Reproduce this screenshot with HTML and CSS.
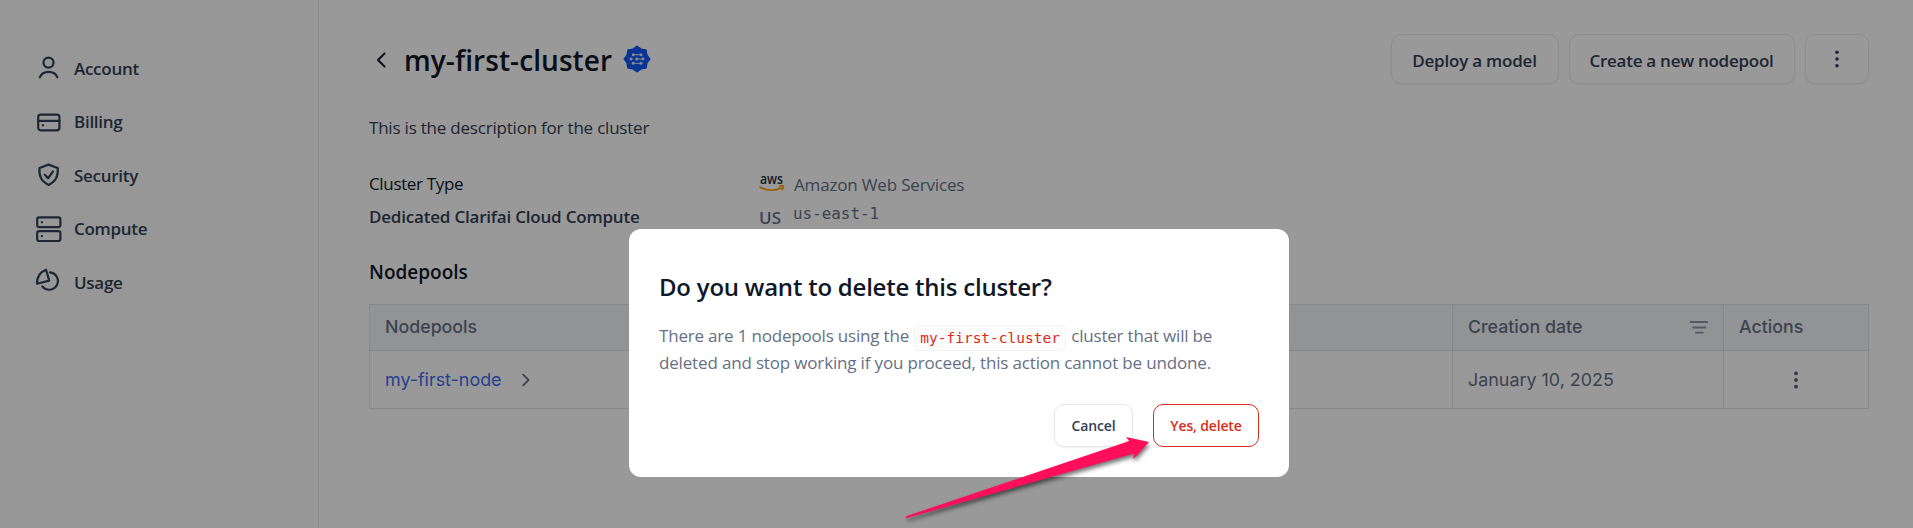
FILE: index.html
```
<!DOCTYPE html>
<html lang="en">
<head>
<meta charset="utf-8">
<title>my-first-cluster</title>
<link rel="stylesheet" href="styles.css">
</head>
<body>
<div class="app">
  <nav class="sidebar">
    <a class="nav-item"><svg class="nav-icon" viewBox="0 0 28 28"><circle cx="14.500" cy="8.600" r="5"/><path d="M5.800 23.300c1.400-3.600 4.800-5.400 8.800-5.400s7.400 1.800 8.800 5.400"/></svg>Account</a>
    <a class="nav-item"><svg class="nav-icon" viewBox="0 0 28 28"><rect x="4.200" y="6.600" width="21.200" height="15.700" rx="2.500"/><path d="M4.200 12.800h21.200"/><path d="M8.700 17.300h.4"/></svg>Billing</a>
    <a class="nav-item"><svg class="nav-icon" viewBox="0 0 28 28"><path d="M14.600 3.600 23.700 7c.7 8-1.500 12.800-9.100 17C7 19.800 4.800 15 5.500 7z"/><path d="M10.800 13.700l3.200 3.600 5-7"/></svg>Security</a>
    <a class="nav-item"><svg class="nav-icon" viewBox="0 0 28 28"><rect x="3.200" y="2.300" width="23.200" height="9.800" rx="2"/><rect x="3.200" y="16.200" width="23.200" height="9.800" rx="2"/><path d="M7.800 7.300h.2M7.800 21.100h.2"/></svg>Compute</a>
    <a class="nav-item"><svg class="nav-icon" viewBox="0 0 28 28"><path d="M12.100 1.800C6.500 3.800 2.900 8.800 3 15.700l12.200-3.100z"/><path d="M16 4.400a8.700 8.700 0 1 1-7.700 14"/></svg>Usage</a>
  </nav>
  <main class="main">
    <header class="header">
      <svg class="back" viewBox="0 0 10 16"><path d="M8.500 1.500 2 8l6.500 6.500"/></svg>
      <h1 class="title">my-first-cluster</h1>
      <svg class="badge" viewBox="0 0 28 28">
        <path class="badge-bg" d="M14 1.500l3.900 2.900 4.900.8.800 4.900 2.900 3.900-2.900 3.900-.8 4.900-4.900.8-3.900 2.900-3.900-2.900-4.900-.8-.8-4.900L1.500 14l2.900-3.900.8-4.900 4.900-.8z"/>
        <path class="badge-line" d="M10 9.700h8M7.500 14h2M14 14h6M10 18.300h8"/>
        <g class="badge-dots"><circle cx="10.300" cy="9.700" r="1.500"/><circle cx="18" cy="9.700" r="1.500"/><circle cx="8" cy="14" r="1.400"/><circle cx="13.600" cy="14" r="1.500"/><circle cx="20" cy="14" r="1.400"/><circle cx="10.300" cy="18.300" r="1.500"/><circle cx="18" cy="18.300" r="1.500"/></g>
      </svg>
      <div class="actions">
        <button class="btn btn-deploy">Deploy a model</button>
        <button class="btn btn-create">Create a new nodepool</button>
        <button class="btn btn-more" aria-label="More"><svg class="dots" viewBox="0 0 6 20"><circle cx="3" cy="3.300" r="1.800"/><circle cx="3" cy="10" r="1.800"/><circle cx="3" cy="16.700" r="1.800"/></svg></button>
      </div>
    </header>
    <p class="description">This is the description for the cluster</p>
    <section class="info">
      <div class="info-type">
        <div class="label">Cluster Type</div>
        <div class="value">Dedicated Clarifai Cloud Compute</div>
      </div>
      <div class="info-cloud">
        <div class="cloud-row">
          <svg class="aws" viewBox="0 0 26 18"><text class="aws-text" x="1" y="8.500" textLength="23" lengthAdjust="spacingAndGlyphs">aws</text><path class="smile" d="M1 12c6.500 4.200 15.500 4.200 21.300.8"/><path class="smile" d="M20.600 11.100c2.200-.6 3.800-.5 3.900 0s-.3 2.200-1.600 3.600"/></svg>
          <span class="provider">Amazon Web Services</span>
        </div>
        <div class="cloud-row"><span class="flag">US</span><span class="region">us-east-1</span></div>
      </div>
    </section>
    <h2 class="subtitle">Nodepools</h2>
    <div class="table">
      <div class="cell th">Nodepools</div>
      <div class="cell th th-date">Creation date<svg class="filter" viewBox="0 0 18 14"><path d="M0 2h18M3 7.500h12.500M5.800 12.700h7"/></svg></div>
      <div class="cell th">Actions</div>
      <div class="cell td"><a class="link">my-first-node</a><svg class="chevron" viewBox="0 0 8 14"><path d="M1.200 1.700 6.500 7l-5.300 5.300"/></svg></div>
      <div class="cell td">January 10, 2025</div>
      <div class="cell td td-actions"><svg class="dots" viewBox="0 0 6 20"><circle cx="3" cy="3.300" r="1.900"/><circle cx="3" cy="10" r="1.900"/><circle cx="3" cy="16.700" r="1.900"/></svg></div>
    </div>
  </main>
</div>
<div class="overlay">
  <div class="modal">
    <h3 class="modal-title">Do you want to delete this cluster?</h3>
    <p class="modal-body"><span class="lead">There are 1 nodepools using the <code class="chip">my-first-cluster</code> cluster that will be</span><br>deleted and stop working if you proceed, this action cannot be undone.</p>
    <div class="modal-actions">
      <button class="mbtn mbtn-cancel">Cancel</button>
      <button class="mbtn mbtn-delete">Yes, delete</button>
    </div>
  </div>
</div>
<svg class="arrow" viewBox="0 0 260 96"><path d="M6 84.300 229.300 9 226 5l23 5-15.700 17.300.7-5.800L6 86.300z"/></svg>
</body>
</html>
```
FILE: styles.css
```
* { box-sizing: border-box; }
body {
  margin: 0;
  height: 528px;
  overflow: hidden;
  font-family: "Open Sans", "Noto Sans", sans-serif;
  font-size: 17px;
  color: #344054;
  background: #fff;
}
h1, h2, h3, p { margin: 0; }
button { font-family: inherit; background: none; cursor: pointer; }
svg { fill: none; stroke-linecap: round; stroke-linejoin: round; flex: none; }

.app { display: flex; height: 528px; }

.sidebar {
  width: 319px;
  padding: 41.800px 0 0 34px;
  background: #fcfcfc;
  border-right: 1px solid #e9eaee;
}
.nav-item {
  display: flex;
  align-items: center;
  gap: 12px;
  height: 53.400px;
  font-weight: 600;
  letter-spacing: -0.280px;
}
.nav-icon { width: 28px; height: 28px; stroke: #344054; stroke-width: 2.200; }

.main { flex: 1; padding: 34px 44px 0 50px; }
.header { display: flex; align-items: center; height: 50px; }
.back { width: 10px; height: 16px; margin: 1px 18px 0 7px; stroke: #101828; stroke-width: 2; }
.title {
  font-size: 28px;
  font-weight: 600;
  line-height: 38px;
  letter-spacing: 0.080px;
  color: #101828;
  padding-top: 2px;
}
.badge { width: 28px; height: 28px; margin-left: 11px; }
.badge-bg { fill: #1158f5; stroke: #1158f5; stroke-width: 2; }
.badge-line { stroke: #dfe6f5; stroke-width: 1; }
.badge-dots { fill: #dfe6f5; }

.actions { display: flex; gap: 10px; margin-left: auto; }
.btn {
  display: flex;
  align-items: center;
  justify-content: center;
  height: 50px;
  padding: 2px 1px 0 0;
  border: 1px solid #eaecf0;
  border-radius: 10px;
  box-shadow: 0 1px 2px rgba(16, 24, 40, 0.06);
  color: #344054;
  font-size: 17px;
  font-weight: 600;
}
.btn-deploy { width: 168px; letter-spacing: -0.220px; }
.btn-create { width: 226px; letter-spacing: -0.260px; }
.btn-more { width: 64px; padding: 0; }
.dots { width: 6px; height: 20px; fill: #344054; }

.description { margin-top: 31px; line-height: 25px; letter-spacing: -0.210px; }
.info { display: flex; margin-top: 28px; line-height: 32px; }
.info-type { width: 390px; }
.label { color: #101828; letter-spacing: -0.350px; }
.value { font-weight: 600; letter-spacing: -0.200px; padding-top: 1px; line-height: 31px; }
.cloud-row { display: flex; align-items: center; height: 32px; color: #667085; }
.aws { width: 26px; height: 18px; margin-right: 9px; overflow: visible; }
.aws-text { font: 600 14px "Open Sans", sans-serif; fill: #252f3e; }
.smile { stroke: #f90; stroke-width: 1.600; }
.provider { letter-spacing: -0.170px; padding-top: 1px; }
.flag { width: 34px; padding: 3px 0 0; font-weight: 600; }
.region { font-family: "DejaVu Sans Mono", monospace; font-size: 15.900px; line-height: 28px; padding-bottom: 4px; }

.subtitle { margin-top: 28px; font-size: 19px; font-weight: 600; line-height: 25px; color: #101828; }

.table {
  display: grid;
  grid-template-columns: 1083px 271px 1fr;
  grid-template-rows: 46px 58px;
  margin-top: 19px;
  border: solid #e0e1e8;
  border-width: 1px 0 0 1px;
  font-family: Inter, sans-serif;
}
.cell {
  display: flex;
  align-items: center;
  padding: 0 15px;
  border: solid #e0e1e8;
  border-width: 0 1px 1px 0;
  color: #667085;
}
.th { padding-bottom: 2px; font-size: 17.800px; font-weight: 500; background: #f4f6f9; }
.th-date { justify-content: space-between; }
.td { font-size: 17.900px; }
.filter { width: 18px; height: 14px; stroke: #8b93a8; stroke-width: 1.800; }
.link { color: #3f6cf0; }
.chevron { width: 8px; height: 14px; margin-left: 20px; stroke: #667085; stroke-width: 1.800; }
.td-actions { justify-content: center; }
.td-actions .dots { fill: #596479; }

.overlay {
  position: absolute;
  inset: 0;
  display: flex;
  justify-content: center;
  align-items: flex-start;
  padding: 229px 0 0 5px;
  background: rgba(0, 0, 0, 0.4);
}
.modal { width: 660px; height: 248px; padding: 40px 30px 0; border-radius: 12px; background: #fff; }
.modal-title { font-size: 24px; font-weight: 600; line-height: 36px; letter-spacing: -0.230px; color: #101828; }
.modal-body { margin-top: 17px; line-height: 27px; letter-spacing: -0.165px; white-space: nowrap; color: #667085; }
.lead { letter-spacing: -0.190px; }
.chip {
  margin: 0 1px;
  padding: 4px 5px;
  border: 1px solid #f2f3f5;
  border-radius: 5px;
  background: #fcfcfd;
  font: 14.500px/0 "DejaVu Sans Mono", monospace;
  letter-spacing: 0;
  color: #dc2a20;
  vertical-align: -1px;
}
.modal-actions { display: flex; justify-content: flex-end; gap: 20px; margin-top: 28px; }
.mbtn {
  height: 43px;
  padding: 0;
  border: 1px solid #e4e7ee;
  border-radius: 10px;
  font-size: 14px;
  font-weight: 600;
  color: #344054;
}
.mbtn-cancel { width: 79px; box-shadow: 0 1px 2px rgba(16, 24, 40, 0.06); letter-spacing: -0.100px; }
.mbtn-delete { width: 106px; border-color: #d92d20; color: #d92d20; letter-spacing: -0.150px; }

.arrow {
  position: absolute;
  left: 900px;
  top: 432px;
  width: 260px;
  height: 96px;
  fill: #ff0f5b;
  filter: drop-shadow(1px 3px 2px rgba(0, 0, 0, 0.55));
}
```
